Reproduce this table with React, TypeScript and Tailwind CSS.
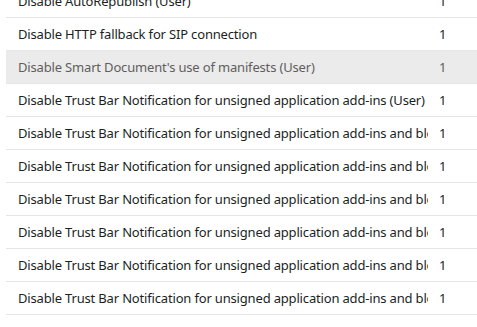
const rows = [
  "Disable AutoRepublish (User)",
  "Disable HTTP fallback for SIP connection",
  "Disable Smart Document's use of manifests (User)",
  "Disable Trust Bar Notification for unsigned application add-ins (User)",
  "Disable Trust Bar Notification for unsigned application add-ins and block them",
  "Disable Trust Bar Notification for unsigned application add-ins and block them (User)",
  "Disable Trust Bar Notification for unsigned application add-ins and block them",
  "Disable Trust Bar Notification for unsigned application add-ins and block them (User)",
  "Disable Trust Bar Notification for unsigned application add-ins and block them",
  "Disable Trust Bar Notification for unsigned application add-ins and block them (User)",
];

export default function App() {
  return (
    <div className="h-[327px] w-[477px] overflow-hidden bg-white pl-[6px]" style={{ fontFamily: '"Noto Sans", "Open Sans", sans-serif' }}>
      <div className="-mt-[15px]">
        {rows.map((name, i) => {
          const selected = i === 2;
          return (
            <div
              key={i}
              className={`flex h-[33px] items-center border-b border-[#e6e6e6] pt-[2px] text-[13px] tracking-[-0.17px] ${
                selected ? "bg-[#ebebeb] text-[#605e5c]" : "text-[#201f1e]"
              }`}
            >
              <div className="w-[422px] pl-3">
                <div className="overflow-hidden whitespace-nowrap">{name}</div>
              </div>
              <div className="pl-[11px]">1</div>
            </div>
          );
        })}
      </div>
    </div>
  );
}
